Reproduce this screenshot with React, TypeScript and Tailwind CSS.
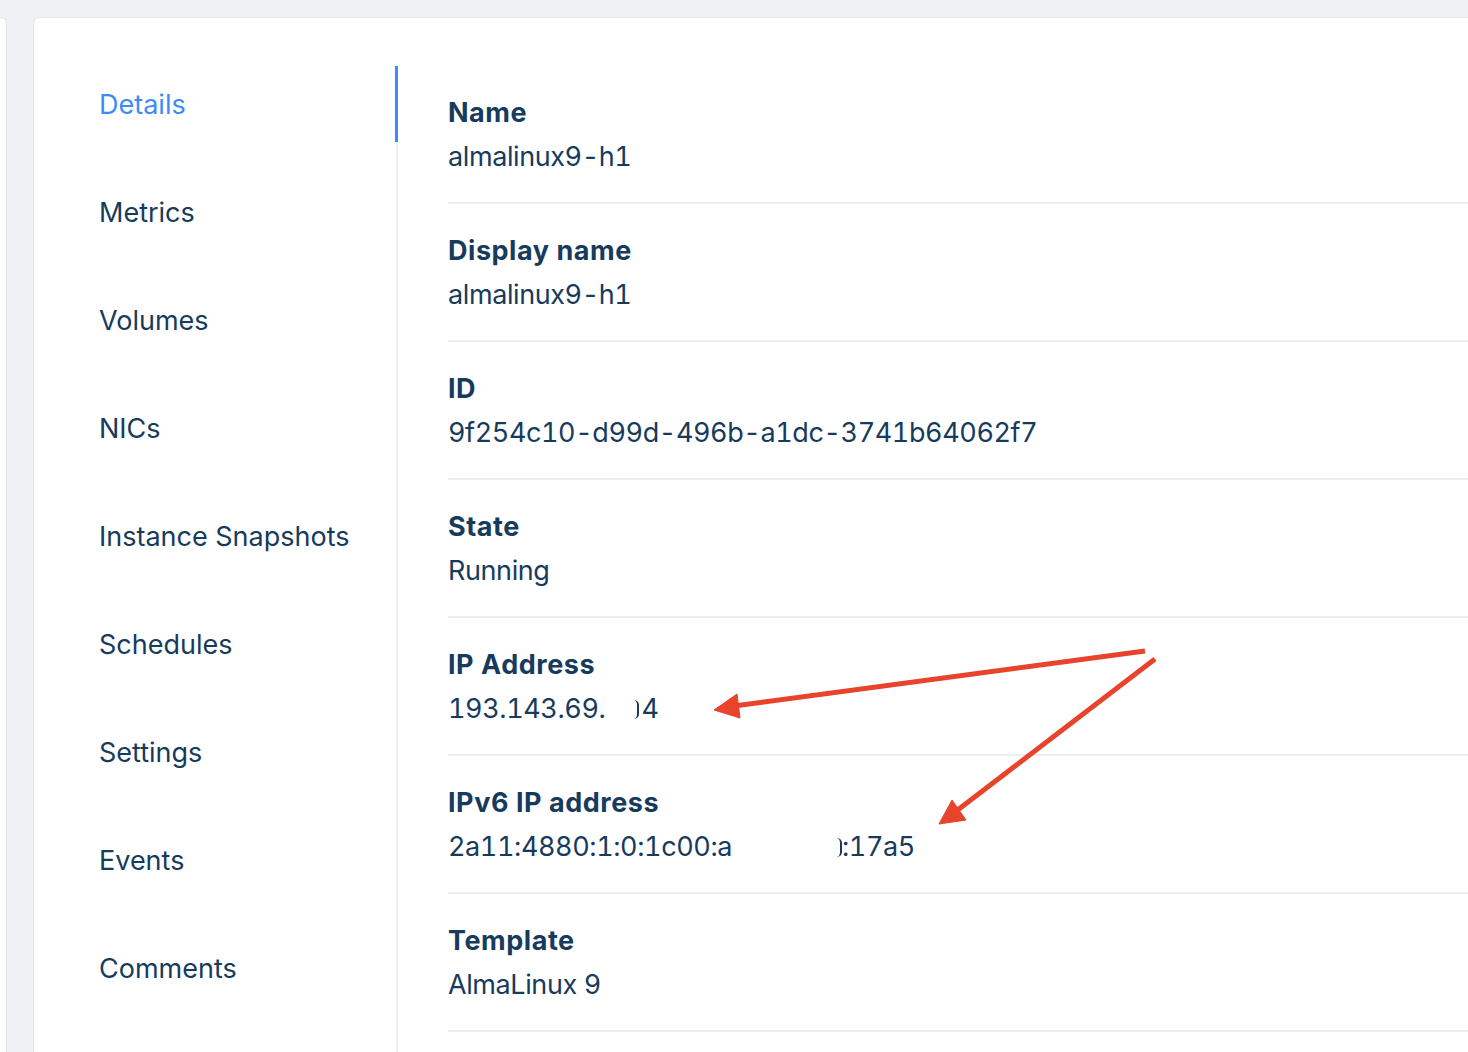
const navItems = [
  "Details",
  "Metrics",
  "Volumes",
  "NICs",
  "Instance Snapshots",
  "Schedules",
  "Settings",
  "Events",
  "Comments",
];

// right edge of a glyph that is painted over in the screenshot
function Fragment() {
  return <span className="inline-block h-[19px] w-[5px] rounded-r-full border-r-[2.5px] border-current align-[-1px]" />;
}

function Row({ label, children }: { label: string; children: React.ReactNode }) {
  return (
    <div className="border-b-2 border-[#efefef] pb-[23px] pt-[25px]">
      <div className="text-[27px] font-bold leading-[44px] tracking-[0.02em]">{label}</div>
      <div className="text-[27px] leading-[44px] tracking-[-0.015em] tabular-nums">{children}</div>
    </div>
  );
}

function Arrows() {
  return (
    <svg
      className="pointer-events-none absolute inset-0"
      width="1468"
      height="1052"
      viewBox="0 0 1468 1052"
    >
      <g fill="#e8432b" stroke="#e8432b">
        <line x1="1145" y1="651" x2="734" y2="706" strokeWidth="5" />
        <polygon points="714,710 737,694 740,718" strokeWidth="1" />
        <line x1="1155" y1="659" x2="955" y2="812" strokeWidth="5" />
        <polygon points="939,824 952,800 966,820" strokeWidth="1" />
      </g>
    </svg>
  );
}

export default function App() {
  return (
    <div
      className="relative flex h-[1052px] w-[1468px] overflow-hidden bg-[#f0f1f4] pt-[17px] text-[#173b5c]"
      style={{ fontFamily: "Inter, 'Noto Sans', sans-serif" }}
    >
      <div className="w-[7px] shrink-0 rounded-tr-[6px] border-r border-t border-[#e3e5e8] bg-white" />
      <div className="ml-[26px] flex w-[1500px] shrink-0 rounded-tl-[6px] border-l border-t border-[#e3e5e8] bg-white pt-12">
        <nav className="flex w-[364px] shrink-0 flex-col gap-8 border-r-2 border-[#efefef] pl-[65px]">
          {navItems.map((item, i) => (
            <div
              key={item}
              className={`relative -mr-[2px] flex h-[76px] items-center pt-[2px] text-[27px] ${
                i === 0 ? "border-r-[3px] border-[#3d8bf5] text-[#3d8bf5]" : ""
              }`}
            >
              {item}
            </div>
          ))}
        </nav>
        <main className="flex-1 pl-[50px]">
          <Row label="Name">almalinux9-h1</Row>
          <Row label="Display name">almalinux9-h1</Row>
          <Row label="ID">9f254c10-d99d-496b-a1dc-3741b64062f7</Row>
          <Row label="State">Running</Row>
          <Row label="IP Address">
            193.143.69.
            <span className="inline-block w-[29px]" />
            <Fragment />
            <span className="ml-[2px]">4</span>
          </Row>
          <Row label="IPv6 IP address">
            2a11:4880:1:0:1c00:a
            <span className="inline-block w-[105px]" />
            <Fragment />
            :17a5
          </Row>
          <Row label="Template">AlmaLinux 9</Row>
        </main>
      </div>
      <Arrows />
    </div>
  );
}
